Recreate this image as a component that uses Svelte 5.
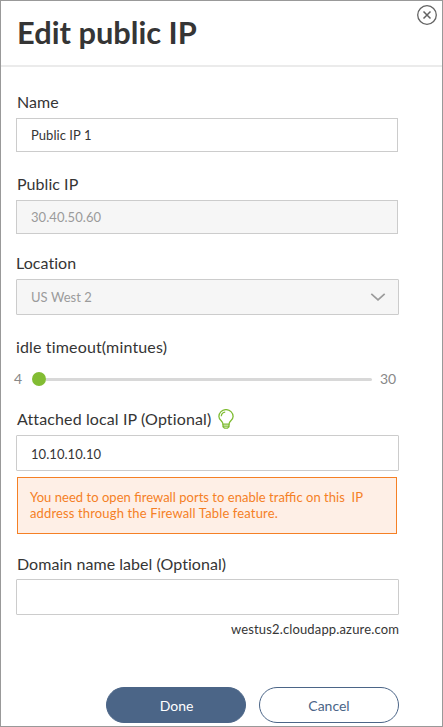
<script>
  let name = $state('Public IP 1');
  let localIp = $state('10.10.10.10');
  let domain = $state('');
</script>

<section class="dialog">
  <header>
    <h1><span>Edit public IP</span></h1>
    <button class="close" aria-label="Close">
      <svg width="20" height="20" viewBox="0 0 20 20" fill="none" stroke="#636363">
        <circle cx="10" cy="10" r="9.3" stroke-width="1.3" />
        <path d="M6.5 6.5l7 7M13.5 6.5l-7 7" stroke-width="1.5" />
      </svg>
    </button>
  </header>

  <form onsubmit={(e) => e.preventDefault()}>
    <div class="field name">
      <label for="name"><span>Name</span></label>
      <input id="name" class="short" bind:value={name} />
    </div>

    <div class="field public">
      <label for="public"><span>Public IP</span></label>
      <input id="public" class="short" value="30.40.50.60" disabled />
    </div>

    <div class="field location">
      <label for="location"><span>Location</span></label>
      <button type="button" id="location" class="select" disabled>
        <span>US West 2</span>
        <svg width="16" height="10" viewBox="0 0 16 10" fill="none" stroke="#9b9b9b" stroke-width="1.7">
          <path d="M1.300 1.800L8 7.800l6.700-6" />
        </svg>
      </button>
    </div>

    <div class="field timeout">
      <div class="label"><span>idle timeout(mintues)</span></div>
      <div class="slider">
        <span class="min">4</span>
        <i class="knob"></i>
        <i class="track"></i>
        <span class="max">30</span>
      </div>
    </div>

    <div class="field attached">
      <label for="local"><span>Attached local IP (Optional)</span>
        <svg class="bulb" width="16" height="20" viewBox="0 0 16 20" fill="none" stroke="#7fbc32" stroke-width="1.3">
          <path d="M5 15.200C5 11.500.9 11.300.9 7.500a7.100 6.900 0 0 1 14.200 0c0 3.800-4.100 4-4.100 7.700z" />
          <path d="M5 15v2.700l1.500 1.500h3l1.500-1.500V15M5 17.200h6" />
          <path d="M3.300 7.200c.2-2.300 1.600-3.700 3.900-4" />
        </svg>
      </label>
      <input id="local" bind:value={localIp} />
    </div>

    <p class="warning"><span class="first">You need to open firewall ports to enable traffic on this &nbsp;IP</span><br /><span class="second">address through the Firewall Table feature.</span></p>

    <div class="field domain">
      <label for="domain"><span>Domain name label (Optional)</span></label>
      <input id="domain" bind:value={domain} />
      <div class="suffix"><span>westus2.cloudapp.azure.com</span></div>
    </div>

    <div class="actions">
      <button type="submit" class="done"><span>Done</span></button>
      <button type="button" class="cancel"><span>Cancel</span></button>
    </div>
  </form>
</section>

<style>
  .dialog {
    box-sizing: border-box;
    width: 443px;
    height: 727px;
    border: 1px solid #999;
    background: #fff;
    color: #353535;
    font-family: Lato, sans-serif;
    overflow: hidden;
  }
  button, input {
    box-sizing: border-box;
    margin: 0;
    font-family: inherit;
  }
  header {
    box-sizing: border-box;
    height: 66px;
    display: flex;
    justify-content: space-between;
    align-items: flex-start;
    padding: 4px 5px 0 16px;
    border-bottom: 2px solid #ebebeb;
  }
  h1 {
    margin: 8px 0 0;
    font-size: 30.8px;
    line-height: 40px;
    font-weight: 700;
  }
  .close {
    display: flex;
    padding: 0;
    border: 0;
    background: none;
  }
  form {
    display: flex;
    flex-direction: column;
    padding: 25px 43px 0 15px;
  }
  .field {
    display: flex;
    flex-direction: column;
  }
  label, .label {
    display: flex;
    height: 26px;
    padding-left: 1px;
    font-size: 16px;
    line-height: 20px;
    letter-spacing: 0.05px;
    white-space: nowrap;
  }
  input, .select {
    width: 383px;
    height: 36px;
    padding: 0 14px;
    border: 1px solid #ccc;
    border-radius: 1px;
    background: #fff;
    color: #353535;
    font-size: 13px;
    letter-spacing: 0.05px;
    outline: none;
  }
  .short {
    width: 382px;
    height: 34px;
    border-radius: 0;
  }
  input:disabled, .select {
    background: #f6f6f6;
    color: #9b9b9b;
  }
  .select {
    display: flex;
    justify-content: space-between;
    align-items: center;
    padding-right: 12px;
  }
  .public { margin-top: 22px; }
  .location { margin-top: 19px; }
  .location label, .timeout .label { padding-left: 0; }
  .timeout { margin-top: 22px; }
  .timeout .label { letter-spacing: 0.15px; }
  .slider {
    display: flex;
    align-items: center;
    height: 32px;
    margin-left: -2px;
    color: #888;
    font-size: 14px;
  }
  .min, .max { padding-bottom: 2px; }
  .min { width: 18px; }
  .knob {
    width: 14px;
    height: 14px;
    border-radius: 50%;
    background: #82bc33;
  }
  .track {
    width: 326px;
    height: 3px;
    border-radius: 0 2px 2px 0;
    background: #d8d8d8;
  }
  .max { margin-left: 8px; }
  .attached { margin-top: 14px; }
  .attached label { letter-spacing: 0.12px; }
  .attached label span { width: 195px; }
  .attached input { padding-top: 2px; }
  .bulb { margin-left: 6px; }
  .warning {
    box-sizing: border-box;
    width: 380px;
    height: 57px;
    margin: 6px 0 0 1px;
    padding: 11px 12px 0;
    border: 1px solid #f58025;
    background: #feefe6;
    color: #f58025;
    font-size: 13px;
    line-height: 16px;
    white-space: nowrap;
    font-feature-settings: "liga" 1;
  }
  .first { letter-spacing: 0.03px; }
  .second { letter-spacing: 0.14px; }
  .domain { margin-top: 20px; }
  .domain label { height: 25px; }
  .suffix {
    width: 383px;
    margin-top: 6px;
    text-align: right;
    font-size: 13px;
    line-height: 16px;
    letter-spacing: 0.15px;
    white-space: nowrap;
  }
  .actions {
    display: flex;
    gap: 13px;
    margin: 50px 0 0 90px;
  }
  .actions button {
    width: 140px;
    height: 36px;
    padding: 0;
    border: 1px solid #4b6587;
    border-radius: 18px;
    font-size: 14px;
  }
  .actions .done { background: #4b6587; color: #fff; padding-left: 1px; }
  .cancel { background: #fff; color: #4b6587; }
</style>
